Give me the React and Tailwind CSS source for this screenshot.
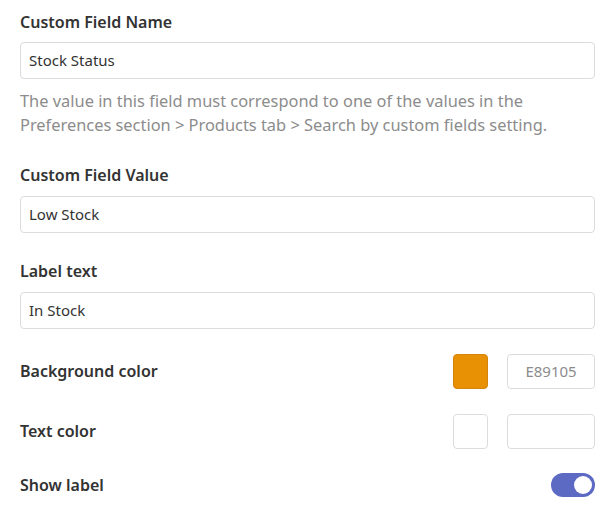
export default function App() {
  const font = { fontFamily: '"Segoe UI", "Noto Sans", "Open Sans", sans-serif' };
  return (
    <div className="w-[615px] h-[520px] bg-white px-5 pt-[11px] text-[#333333]" style={font}>
      <div className="flex flex-col">
        <div className="text-[16px] font-semibold leading-[22px]">Custom Field Name</div>
        <div className="mt-[9px] h-[37px] border border-[#dcdcdc] rounded-[4px] px-2 flex items-center text-[15px]">Stock Status</div>
        <div className="mt-[10px] text-[16.4px] leading-[24px] text-[#8c8c8c]">
          The value in this field must correspond to one of the values in the Preferences section &gt; Products tab &gt; Search by custom fields setting.
        </div>
        <div className="mt-[27px] text-[16px] font-semibold leading-[22px]">Custom Field Value</div>
        <div className="mt-[10px] h-[37px] border border-[#dcdcdc] rounded-[4px] px-2 flex items-center text-[15px]">Low Stock</div>
        <div className="mt-[27px] text-[16px] font-semibold leading-[22px]">Label text</div>
        <div className="mt-[10px] h-[37px] border border-[#dcdcdc] rounded-[4px] px-2 flex items-center text-[15px]">In Stock</div>
        <div className="mt-[24px] flex items-center justify-between h-[36px]">
          <div className="text-[16px] font-semibold">Background color</div>
          <div className="flex items-center gap-[19px]">
            <div className="w-[35px] h-[35px] rounded-[4px] bg-[#e89105] border border-[#d4840a]"></div>
            <div className="w-[88px] h-[35px] border border-[#dcdcdc] rounded-[4px] flex items-center justify-center text-[15px] text-[#8c8c8c]">E89105</div>
          </div>
        </div>
        <div className="mt-[24px] flex items-center justify-between h-[36px]">
          <div className="text-[16px] font-semibold">Text color</div>
          <div className="flex items-center gap-[19px]">
            <div className="w-[35px] h-[35px] rounded-[4px] bg-white border border-[#dcdcdc]"></div>
            <div className="w-[88px] h-[35px] border border-[#dcdcdc] rounded-[4px]"></div>
          </div>
        </div>
        <div className="mt-[23px] flex items-center justify-between h-[26px]">
          <div className="text-[16px] font-semibold">Show label</div>
          <div className="w-[44px] h-[24px] rounded-full bg-[#5c6ac4] flex items-center justify-end pr-[3px]">
            <div className="w-[18px] h-[18px] rounded-full bg-white"></div>
          </div>
        </div>
      </div>
    </div>
  );
}
